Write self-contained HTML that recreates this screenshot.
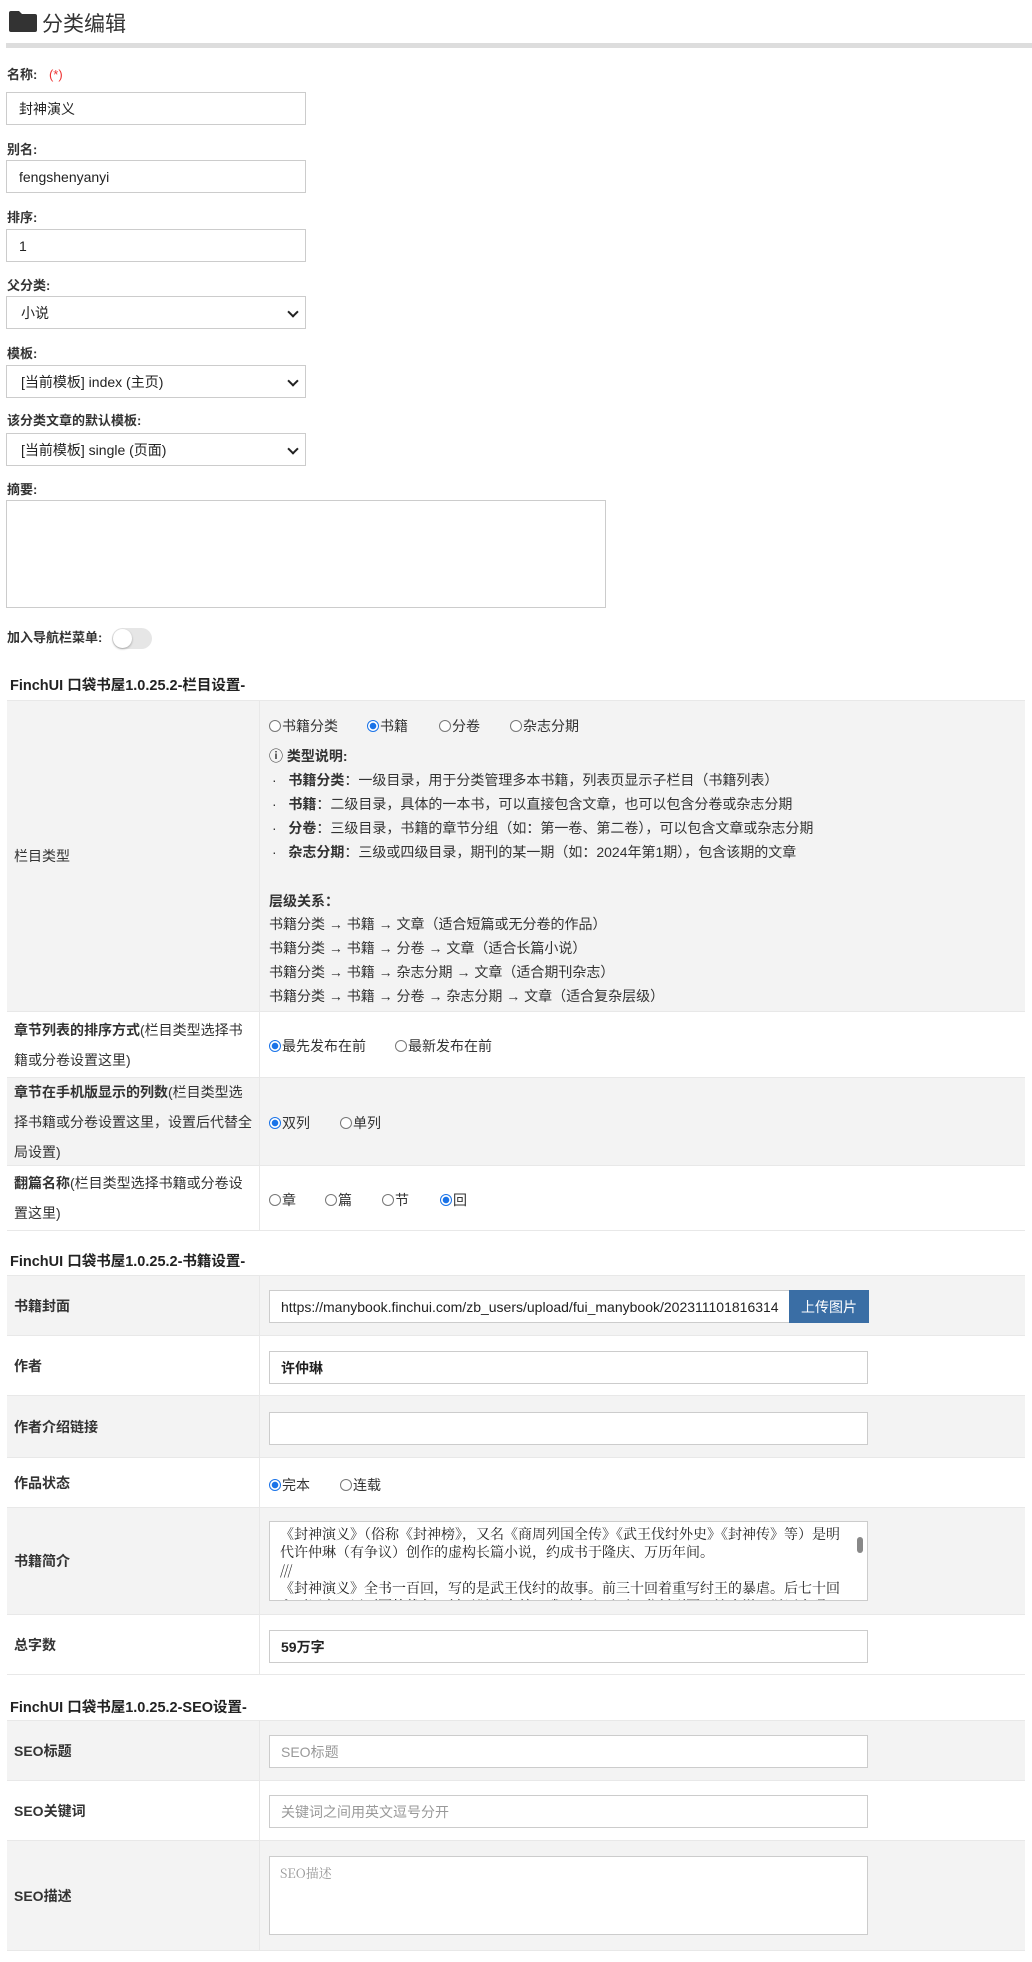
<!DOCTYPE html>
<html><head><meta charset="utf-8">
<style>
*{box-sizing:border-box;margin:0;padding:0}
body{width:1032px;height:1962px;background:#fff;position:relative;font-family:"Liberation Sans","Noto Sans CJK SC",sans-serif;color:#333;overflow:hidden}
.a{position:absolute}
.lbl{position:absolute;left:7px;font-size:13px;font-weight:bold;color:#333;line-height:16px}
.inp{position:absolute;border:1px solid #ccc;background:#fff;font-size:14px;color:#222;padding-left:12px;display:flex;align-items:center}
.sel{padding-left:14px}
.sel:after{content:"";position:absolute;right:8px;top:11px;width:6px;height:6px;border-right:2px solid #222;border-bottom:2px solid #222;transform:rotate(45deg)}
.sec{position:absolute;left:10px;font-size:14.5px;font-weight:bold;color:#222}
.row{position:absolute;left:7px;width:1018px;border-bottom:1px solid #e8e8e8}
.row .l{position:absolute;left:0;top:0;bottom:0;width:253px;border-right:1px solid #e8e8e8;padding:0 6px 0 7px;display:flex;align-items:center;font-size:14px;line-height:30px;color:#333}
.g{background:#f3f3f3}
.r{display:inline-block;width:12px;height:12px;border:1px solid #777;border-radius:50%;vertical-align:-1px;background:#fff;margin-right:1px}
.r.on{border:1px solid #1a73e8;background:radial-gradient(circle,#1a73e8 0 3px,#fff 3.5px)}
.tx{position:absolute;font-size:14px;color:#333;white-space:nowrap}
.ti{position:absolute;left:269px;width:599px;height:33px;border:1px solid #ccc;background:#fff;font-size:14px;padding-left:11px;display:flex;align-items:center;color:#222}
.ph{color:#999}
</style></head><body>
<svg class="a" style="left:9px;top:11px" width="28" height="21" viewBox="0 0 28 21"><path d="M2 0h8l3 3h13a2 2 0 0 1 2 2v14a2 2 0 0 1-2 2H2a2 2 0 0 1-2-2V2a2 2 0 0 1 2-2z" fill="#333"/></svg>
<div class="a" style="left:42px;top:8px;font-size:21px;color:#333">分类编辑</div>
<div class="a" style="left:6px;top:43px;width:1026px;height:5px;background:#ddd"></div>

<div class="lbl" style="top:67px">名称: <span style="color:#e33;font-weight:normal;margin-left:8px">(*)</span></div>
<div class="inp" style="left:6px;top:92px;width:300px;height:33px">封神演义</div>
<div class="lbl" style="top:142px">别名:</div>
<div class="inp" style="left:6px;top:160px;width:300px;height:33px">fengshenyanyi</div>
<div class="lbl" style="top:210px">排序:</div>
<div class="inp" style="left:6px;top:229px;width:300px;height:33px">1</div>
<div class="lbl" style="top:278px">父分类:</div>
<div class="inp sel" style="left:6px;top:296px;width:300px;height:33px">小说</div>
<div class="lbl" style="top:346px">模板:</div>
<div class="inp sel" style="left:6px;top:365px;width:300px;height:33px">[当前模板] index (主页)</div>
<div class="lbl" style="top:413px">该分类文章的默认模板:</div>
<div class="inp sel" style="left:6px;top:433px;width:300px;height:33px">[当前模板] single (页面)</div>
<div class="lbl" style="top:482px">摘要:</div>
<div class="inp" style="left:6px;top:500px;width:600px;height:108px"></div>
<div class="lbl" style="top:630px">加入导航栏菜单:</div>
<div class="a" style="left:112px;top:628px;width:40px;height:21px;border-radius:11px;background:#e6e6e6"><div class="a" style="left:1px;top:1px;width:19px;height:19px;border-radius:50%;background:#fff;box-shadow:0 1px 2px rgba(0,0,0,.3)"></div></div>

<div class="sec" style="top:674px">FinchUI 口袋书屋1.0.25.2-栏目设置-</div>
<div class="row g" style="top:700px;height:312px;border-top:1px solid #e8e8e8"><div class="l">栏目类型</div></div>
<div class="tx" style="left:269px;top:716px"><span class="r"></span>书籍分类</div>
<div class="tx" style="left:367px;top:716px"><span class="r on"></span>书籍</div>
<div class="tx" style="left:439px;top:716px"><span class="r"></span>分卷</div>
<div class="tx" style="left:510px;top:716px"><span class="r"></span>杂志分期</div>
<div class="tx" style="left:269px;top:746px"><b>ⓘ 类型说明:</b></div>
<div class="tx" style="left:272px;top:770px">·&nbsp;&nbsp; <b>书籍分类</b>：一级目录，用于分类管理多本书籍，列表页显示子栏目（书籍列表）</div>
<div class="tx" style="left:272px;top:794px">·&nbsp;&nbsp; <b>书籍</b>：二级目录，具体的一本书，可以直接包含文章，也可以包含分卷或杂志分期</div>
<div class="tx" style="left:272px;top:818px">·&nbsp;&nbsp; <b>分卷</b>：三级目录，书籍的章节分组（如：第一卷、第二卷），可以包含文章或杂志分期</div>
<div class="tx" style="left:272px;top:842px">·&nbsp;&nbsp; <b>杂志分期</b>：三级或四级目录，期刊的某一期（如：2024年第1期），包含该期的文章</div>
<div class="tx" style="left:269px;top:891px"><b>层级关系：</b></div>
<div class="tx" style="left:269px;top:914px">书籍分类 → 书籍 → 文章（适合短篇或无分卷的作品）</div>
<div class="tx" style="left:269px;top:938px">书籍分类 → 书籍 → 分卷 → 文章（适合长篇小说）</div>
<div class="tx" style="left:269px;top:962px">书籍分类 → 书籍 → 杂志分期 → 文章（适合期刊杂志）</div>
<div class="tx" style="left:269px;top:986px">书籍分类 → 书籍 → 分卷 → 杂志分期 → 文章（适合复杂层级）</div>

<div class="row" style="top:1012px;height:66px"><div class="l"><span><b>章节列表的排序方式</b>(栏目类型选择书籍或分卷设置这里)</span></div></div>
<div class="tx" style="left:269px;top:1036px"><span class="r on"></span>最先发布在前</div>
<div class="tx" style="left:395px;top:1036px"><span class="r"></span>最新发布在前</div>
<div class="row g" style="top:1078px;height:88px"><div class="l"><span><b>章节在手机版显示的列数</b>(栏目类型选择书籍或分卷设置这里，设置后代替全局设置)</span></div></div>
<div class="tx" style="left:269px;top:1113px"><span class="r on"></span>双列</div>
<div class="tx" style="left:340px;top:1113px"><span class="r"></span>单列</div>
<div class="row" style="top:1166px;height:65px"><div class="l"><span><b>翻篇名称</b>(栏目类型选择书籍或分卷设置这里)</span></div></div>
<div class="tx" style="left:269px;top:1190px"><span class="r"></span>章</div>
<div class="tx" style="left:325px;top:1190px"><span class="r"></span>篇</div>
<div class="tx" style="left:382px;top:1190px"><span class="r"></span>节</div>
<div class="tx" style="left:440px;top:1190px"><span class="r on"></span>回</div>

<div class="sec" style="top:1250px">FinchUI 口袋书屋1.0.25.2-书籍设置-</div>
<div class="row g" style="top:1275px;height:61px;border-top:1px solid #e8e8e8"><div class="l"><b>书籍封面</b></div></div>
<div class="ti" style="top:1290px;width:521px;white-space:nowrap;overflow:hidden">https://manybook.finchui.com/zb_users/upload/fui_manybook/202311101816314</div>
<div class="a" style="left:789px;top:1290px;width:80px;height:33px;background:#3a6ea5;color:#fff;font-size:14px;display:flex;align-items:center;justify-content:center">上传图片</div>
<div class="row" style="top:1336px;height:60px"><div class="l"><b>作者</b></div></div>
<div class="ti" style="top:1351px"><b>许仲琳</b></div>
<div class="row g" style="top:1396px;height:62px"><div class="l"><b>作者介绍链接</b></div></div>
<div class="ti" style="top:1412px"></div>
<div class="row" style="top:1458px;height:50px"><div class="l"><b>作品状态</b></div></div>
<div class="tx" style="left:269px;top:1475px"><span class="r on"></span>完本</div>
<div class="tx" style="left:340px;top:1475px"><span class="r"></span>连载</div>
<div class="row g" style="top:1508px;height:107px"><div class="l"><b>书籍简介</b></div></div>
<div class="a" style="left:269px;top:1521px;width:599px;height:80px;border:1px solid #ccc;background:#fff;overflow:hidden;font-size:14px;line-height:18px;padding:3px 20px 0 10px;font-family:'Noto Serif CJK SC','Liberation Sans',serif;color:#222">《封神演义》（俗称《封神榜》，又名《商周列国全传》《武王伐纣外史》《封神传》等）是明代许仲琳（有争议）创作的虚构长篇小说，约成书于隆庆、万历年间。<br>///<br>《封神演义》全书一百回，写的是武王伐纣的故事。前三十回着重写纣王的暴虐。后七十回主要写商、周两国的战争，纣王以而自焚，武王夺取天下，分封列国。该小说，以历史观</div>
<div class="a" style="left:855px;top:1523px;width:10px;height:48px;background:#fff"><div class="a" style="left:2px;top:14px;width:6px;height:16px;border-radius:3px;background:#888"></div></div>
<div class="row" style="top:1615px;height:60px"><div class="l"><b>总字数</b></div></div>
<div class="ti" style="top:1630px"><b>59万字</b></div>

<div class="sec" style="top:1696px">FinchUI 口袋书屋1.0.25.2-SEO设置-</div>
<div class="row g" style="top:1720px;height:61px;border-top:1px solid #e8e8e8"><div class="l"><b>SEO标题</b></div></div>
<div class="ti ph" style="top:1735px">SEO标题</div>
<div class="row" style="top:1781px;height:60px"><div class="l"><b>SEO关键词</b></div></div>
<div class="ti ph" style="top:1795px">关键词之间用英文逗号分开</div>
<div class="row g" style="top:1841px;height:110px"><div class="l"><b>SEO描述</b></div></div>
<div class="a ph" style="left:269px;top:1856px;width:599px;height:79px;border:1px solid #ccc;background:#fff;font-size:13px;padding:6px 10px;font-family:'Noto Serif CJK SC',serif">SEO描述</div>
</body></html>
